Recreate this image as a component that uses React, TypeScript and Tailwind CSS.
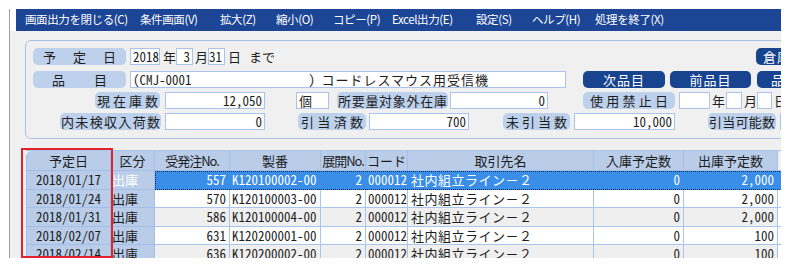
import React from "react";

const menuItems = [
  { label: "画面出力を閉じる(C)", w: "w-[115px]" },
  { label: "条件画面(V)", w: "w-[80px]" },
  { label: "拡大(Z)", w: "w-[56px]" },
  { label: "縮小(O)", w: "w-[57px]" },
  { label: "コピー(P)", w: "w-[59px]" },
  { label: "Excel出力(E)", w: "w-[84px]" },
  { label: "設定(S)", w: "w-[56px]" },
  { label: "ヘルプ(H)", w: "w-[63px]" },
  { label: "処理を終了(X)", w: "w-[100px]" },
];

const rows = [
  { date: "2018/01/17", no: "557", sei: "K120100002-00", out: "2,000" },
  { date: "2018/01/24", no: "570", sei: "K120100003-00", out: "2,000" },
  { date: "2018/01/31", no: "586", sei: "K120100004-00", out: "2,000" },
  { date: "2018/02/07", no: "631", sei: "K120200001-00", out: "100" },
  { date: "2018/02/14", no: "636", sei: "K120200002-00", out: "100" },
];

const hw = "[font-feature-settings:'hwid']";

function Pill({ text, className }: { text: string; className: string }) {
  return (
    <div
      className={`shrink-0 h-[17px] flex items-center justify-between rounded-[5px] bg-[#bdd1ec] text-[13px] text-[#1e1e1e] leading-none ${className}`}
    >
      {text.split("").map((c, i) => (
        <span key={i}>{c}</span>
      ))}
    </div>
  );
}

function Field({
  className,
  right,
  children,
}: {
  className: string;
  right?: boolean;
  children?: React.ReactNode;
}) {
  return (
    <div
      className={`shrink-0 h-[17px] flex items-center bg-white border border-[#a9c3ea] text-[13px] text-[#1e1e1e] leading-none whitespace-pre ${hw} ${
        right ? "justify-end pr-[2px]" : "pl-[2px]"
      } ${className}`}
    >
      {children}
    </div>
  );
}

function Btn({ text, className, left }: { text: string; className: string; left?: boolean }) {
  return (
    <div
      className={`shrink-0 h-[17px] flex items-center ${left ? "justify-start" : "justify-center"} rounded-[5px] bg-[#18448f] text-white text-[13px] leading-none tracking-[1px] overflow-hidden whitespace-nowrap ${className}`}
    >
      {text}
    </div>
  );
}

function Unit({ text, className }: { text: string; className: string }) {
  return (
    <span className={`shrink-0 text-[13px] leading-none text-[#1e1e1e] ${className}`}>
      {text}
    </span>
  );
}

const cols = [
  "w-[85px]",
  "w-[44px]",
  "w-[75px]",
  "w-[91px]",
  "w-[45px]",
  "w-[42px]",
  "w-[186px]",
  "w-[90px]",
  "w-[94px]",
];

const headers = ["予定日", "区分", "受発注No.", "製番", "展開No.", "コード", "取引先名", "入庫予定数", "出庫予定数"];

export default function App() {
  return (
    <div className="w-[794px] h-[272px] bg-white overflow-hidden font-['Noto_Sans_CJK_JP',sans-serif]">
      <div className="relative ml-[9px] mt-[9px] w-[772px] h-[249px] border-l border-[#a0a0a0] overflow-hidden flex flex-col bg-[#f0f0f0]">
        {/* menu bar */}
        <div className="flex shrink-0 bg-white">
          <div className="w-[6px] shrink-0" />
          <div className="flex-1 h-[22px] bg-[#1c4595] flex items-center text-white text-[11.5px] tracking-[-0.4px] leading-none">
            <div className="w-[9px] shrink-0" />
            {menuItems.map((m) => (
              <span key={m.label} className={`shrink-0 ${m.w}`}>
                {m.label}
              </span>
            ))}
          </div>
        </div>

        <div className="ml-[6px] flex flex-col">
          {/* condition panel */}
          <div className="ml-[9px] mt-[9px] w-[820px] border border-[#a8c3ea] rounded-[6px] pt-[7px] pb-[8px] flex flex-col">
            <div className="flex items-center">
              <Pill text="予定日" className="ml-[7px] w-[93px] px-[10px]" />
              <Field className="ml-[4px] w-[30px]">2018</Field>
              <Unit text="年" className="w-[16px] pl-[3px]" />
              <Field className="w-[17px]" right>
                3
              </Field>
              <Unit text="月" className="w-[15px] pl-[2px]" />
              <Field className="w-[17px]" right>
                31
              </Field>
              <Unit text="日" className="w-[24px] pl-[3px]" />
              <Unit text="まで" className="w-[30px]" />
              <Btn text="倉庫" left className="ml-[477px] w-[60px] pl-[7px]" />
            </div>

            <div className="flex items-center mt-[6px]">
              <Pill text="品目" className="ml-[7px] w-[93px] px-[19px]" />
              <Field className="ml-[4px] w-[436px]">
                <span>{"(CMJ-0001                  ) "}</span>
                <span className="[font-feature-settings:normal] tracking-[1px]">コードレスマウス用受信機</span>
              </Field>
              <Btn text="次品目" className="ml-[17px] w-[82px]" />
              <Btn text="前品目" className="ml-[5px] w-[81px]" />
              <Btn text="品目" left className="ml-[6px] w-[60px] pl-[14px]" />
            </div>

            <div className="flex items-center mt-[4px]">
              <Pill text="現在庫数" className="ml-[69px] w-[65px] px-[2px]" />
              <Field className="ml-[5px] w-[100px]" right>
                12,050
              </Field>
              <Field className="ml-[31px] w-[33px] [font-feature-settings:normal]">個</Field>
              <Pill text="所要量対象外在庫" className="ml-[8px] w-[111px] px-[1px]" />
              <Field className="ml-[2px] w-[98px]" right>
                0
              </Field>
              <Pill text="使用禁止日" className="ml-[35px] w-[92px] px-[7px]" />
              <Field className="ml-[4px] w-[31px]" />
              <Unit text="年" className="w-[16px] pl-[2px]" />
              <Field className="w-[16px]" />
              <Unit text="月" className="w-[15px] pl-[2px]" />
              <Field className="w-[15px]" />
              <Unit text="日" className="w-[16px] pl-[2px]" />
            </div>

            <div className="flex items-center mt-[4px]">
              <Pill text="内未検収入荷数" className="ml-[34px] w-[101px] px-[1px]" />
              <Field className="ml-[4px] w-[100px]" right>
                0
              </Field>
              <Pill text="引当済数" className="ml-[33px] w-[68px] px-[3px]" />
              <Field className="ml-[3px] w-[100px]" right>
                700
              </Field>
              <Pill text="未引当数" className="ml-[34px] w-[67px] px-[3px]" />
              <Field className="ml-[4px] w-[101px]" right>
                10,000
              </Field>
              <Pill text="引当可能数" className="ml-[33px] w-[68px] px-[1px]" />
              <Field className="ml-[4px] w-[60px]" right />
            </div>
          </div>

          {/* grid */}
          <div className="ml-[10px] mt-[11px] w-[780px] border-t border-[#a9c5ec] text-[13px] text-[#1e1e1e] leading-none">
            <div className="flex h-[20px]">
              {headers.map((h, i) => (
                <div
                  key={h}
                  className={`${cols[i]} shrink-0 flex items-center justify-center bg-[#b9cde9] border-r border-b border-[#a3bfe9] ${
                    i === 0 ? "rounded-tl-[6px] border-l" : ""
                  } ${h.includes("No.") ? "tracking-[-1px]" : ""}`}
                >
                  {h}
                </div>
              ))}
              <div className="w-[8px] shrink-0 bg-[#f0f0f0] border-b border-[#a3bfe9]" />
            </div>

            {rows.map((r, ri) => {
              const sel = ri === 0;
              const bg = sel ? "bg-[#3b8ee8] text-white" : ri % 2 === 0 ? "bg-[#efefef]" : "bg-white";
              const cell = `shrink-0 flex items-center border-r border-b ${sel ? "border-[#3b8ee8]" : "border-[#a9c5ec]"} ${bg}`;
              return (
                <div key={r.date} className="relative flex h-[18.5px]">
                  <div className={`${cols[0]} shrink-0 flex items-center justify-center bg-[#b9cde9] border-l border-r border-b border-[#a3bfe9] ${hw}`}>
                    {r.date}
                  </div>
                  <div className={`${cols[1]} shrink-0 flex items-center pl-[1px] bg-[#b9cde9] border-r border-b border-[#a3bfe9] ${sel ? "text-white" : ""}`}>
                    出庫
                  </div>
                  <div className={`${cols[2]} ${cell} justify-end pr-[3px] ${hw}`}>{r.no}</div>
                  <div className={`${cols[3]} ${cell} pl-[2px] ${hw}`}>{r.sei}</div>
                  <div className={`${cols[4]} ${cell} justify-end pr-[3px] ${hw}`}>2</div>
                  <div className={`${cols[5]} ${cell} pl-[2px] ${hw}`}>000012</div>
                  <div className={`${cols[6]} ${cell} pl-[3px] tracking-[0.5px]`}>社内組立ライン－２</div>
                  <div className={`${cols[7]} ${cell} justify-end pr-[3px] ${hw}`}>0</div>
                  <div className={`${cols[8]} ${cell} justify-end pr-[3px] ${hw}`}>{r.out}</div>
                  <div className={`w-[8px] ${cell} ${sel ? "" : "bg-white"}`} />
                  {sel && (
                    <div className="absolute left-[129px] right-[8px] top-0 bottom-0 border border-dotted border-[#0a2a5a] pointer-events-none" />
                  )}
                </div>
              );
            })}
          </div>
        </div>

        {/* red annotation frame */}
        <div className="absolute left-[11px] top-[139px] w-[92px] h-[110px] border-2 border-[#e3232c] pointer-events-none" />
      </div>
    </div>
  );
}
